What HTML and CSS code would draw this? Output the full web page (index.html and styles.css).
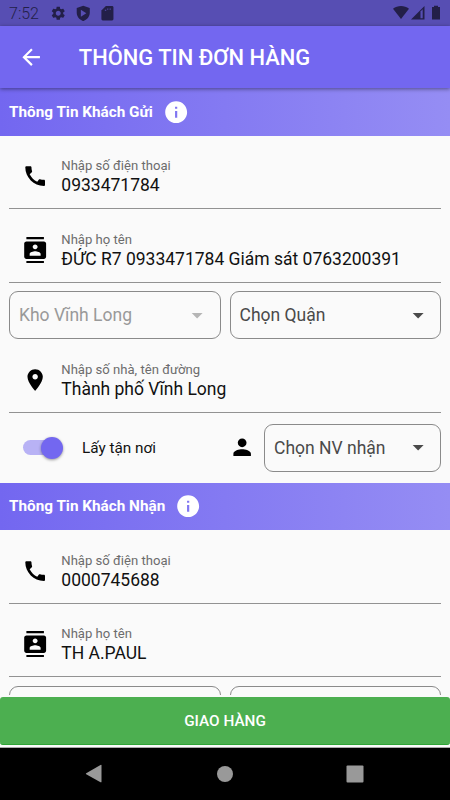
FILE: index.html
```html
<!DOCTYPE html>
<html lang="vi">

<head>
    <meta charset="UTF-8">
    <meta name="viewport" content="width=device-width, initial-scale=1.0">
    <title>Thông tin đơn hàng</title>
    <link rel="stylesheet" href="styles.css">
</head>

<body>
    <!-- icons -->
    <svg class="sprite" width="0" height="0">
        <symbol id="phone" viewBox="0 0 24 24">
            <path d="M20.01 15.38c-1.23 0-2.42-.2-3.53-.56-.35-.12-.74-.03-1.01.24l-1.57 1.97c-2.83-1.35-5.48-3.9-6.89-6.83l1.95-1.66c.27-.28.35-.67.24-1.02-.37-1.11-.56-2.3-.56-3.53 0-.54-.45-.99-.99-.99H4.19C3.65 3 3 3.24 3 3.99 3 13.28 10.73 21 20.01 21c.71 0 .99-.63.99-1.18v-3.45c0-.54-.45-.99-.99-.99z"/>
        </symbol>
        <symbol id="contacts" viewBox="0 0 24 24">
            <path d="M20 0H4v2h16V0zM4 24h16v-2H4v2zM20 4H4c-1.1 0-2 .9-2 2v12c0 1.1.9 2 2 2h16c1.1 0 2-.9 2-2V6c0-1.1-.9-2-2-2zm-8 2.75c1.24 0 2.25 1.01 2.25 2.25s-1.01 2.25-2.25 2.25S9.75 10.24 9.75 9 10.76 6.75 12 6.75zM17 17H7v-1.5c0-1.67 3.33-2.5 5-2.5s5 .83 5 2.5V17z"/>
        </symbol>
        <symbol id="place" viewBox="0 0 24 24">
            <path d="M12 2C8.13 2 5 5.13 5 9c0 5.25 7 13 7 13s7-7.75 7-13c0-3.87-3.13-7-7-7zm0 9.5c-1.38 0-2.5-1.12-2.5-2.5s1.12-2.5 2.5-2.5 2.5 1.12 2.5 2.5-1.12 2.5-2.5 2.5z"/>
        </symbol>
        <symbol id="person" viewBox="0 0 24 24">
            <path d="M12 12c2.21 0 4-1.79 4-4s-1.79-4-4-4-4 1.79-4 4 1.79 4 4 4zm0 2c-2.67 0-8 1.34-8 4v2h16v-2c0-2.66-5.33-4-8-4z"/>
        </symbol>
        <symbol id="info" viewBox="0 0 24 24">
            <path d="M12 2C6.48 2 2 6.48 2 12s4.48 10 10 10 10-4.48 10-10S17.52 2 12 2zm1 15h-2v-6h2v6zm0-8h-2V7h2v2z"/>
        </symbol>
        <symbol id="back" viewBox="0 0 24 24">
            <path d="M20 11H7.83l5.59-5.59L12 4l-8 8 8 8 1.41-1.41L7.83 13H20v-2z"/>
        </symbol>
        <symbol id="arrow" viewBox="0 0 24 24">
            <path d="M7 10l5 5 5-5z"/>
        </symbol>
    </svg>

    <div class="status">
        <span class="time">7:52</span>
        <svg class="st-icon" viewBox="0 0 24 24"><path d="M19.14 12.94c.04-.3.06-.61.06-.94 0-.32-.02-.64-.07-.94l2.03-1.58c.18-.14.23-.41.12-.61l-1.92-3.32c-.12-.22-.37-.29-.59-.22l-2.39.96c-.5-.38-1.03-.7-1.62-.94l-.36-2.54c-.04-.24-.24-.41-.48-.41h-3.84c-.24 0-.43.17-.47.41l-.36 2.54c-.59.24-1.13.57-1.62.94l-2.39-.96c-.22-.08-.47 0-.59.22L2.74 8.87c-.12.21-.08.47.12.61l2.03 1.58c-.05.3-.09.63-.09.94s.02.64.07.94l-2.03 1.58c-.18.14-.23.41-.12.61l1.92 3.32c.12.22.37.29.59.22l2.39-.96c.5.38 1.03.7 1.62.94l.36 2.54c.05.24.24.41.48.41h3.84c.24 0 .44-.17.47-.41l.36-2.54c.59-.24 1.13-.56 1.62-.94l2.39.96c.22.08.47 0 .59-.22l1.92-3.32c.12-.22.07-.47-.12-.61l-2.01-1.58zM12 15.6c-1.98 0-3.6-1.62-3.6-3.6s1.62-3.6 3.6-3.6 3.6 1.62 3.6 3.6-1.62 3.6-3.6 3.6z"/></svg>
        <svg class="st-icon" viewBox="0 0 24 24"><path fill-rule="evenodd" d="M12 1L2.500 4.500V11c0 6 4 10.500 9.500 12.500 5.500-2 9.500-6.500 9.500-12.500V4.500zM8.500 7v10l8-5z"/></svg>
        <svg class="st-icon" viewBox="0 0 24 24"><path d="M19 1.500h-9L3.500 8v12.500c0 1.100.9 2 2 2H19c1.100 0 2-.9 2-2v-17c0-1.100-.9-2-2-2z"/><path class="pins" d="M8.500 8.500h2V6.800H8.500zM12 7h1.500V5H12zM15.500 7H17V5h-1.500z"/></svg>
        <svg class="signals" viewBox="0 0 50 16">
            <path d="M1 3.800C5.500.2 12.500.2 17 3.800L9 14z"/>
            <path d="M32.500 1v13.500H19z"/>
            <path class="low" d="M28.500 6.500l2.200-2.200v9h-2.200z"/>
            <path d="M40 2h2V.8h4V2h2v12.600h-8z"/>
        </svg>
    </div>

    <header class="appbar">
        <svg class="icon"><use href="#back"/></svg>
        <h1>THÔNG TIN ĐƠN HÀNG</h1>
    </header>

    <main class="content">
        <h2 class="section">Thông Tin Khách Gửi <svg class="icon"><use href="#info"/></svg></h2>

        <div class="field">
            <svg class="icon"><use href="#phone"/></svg>
            <div class="text">
                <div class="label">Nhập số điện thoại</div>
                <div class="value">0933471784</div>
            </div>
        </div>
        <div class="field">
            <svg class="icon"><use href="#contacts"/></svg>
            <div class="text">
                <div class="label">Nhập họ tên</div>
                <div class="value">ĐỨC R7 0933471784 Giám sát 0763200391</div>
            </div>
        </div>
        <div class="row">
            <div class="select disabled">Kho Vĩnh Long <svg class="icon"><use href="#arrow"/></svg></div>
            <div class="select">Chọn Quận <svg class="icon"><use href="#arrow"/></svg></div>
        </div>
        <div class="field">
            <svg class="icon"><use href="#place"/></svg>
            <div class="text">
                <div class="label">Nhập số nhà, tên đường</div>
                <div class="value">Thành phố Vĩnh Long</div>
            </div>
        </div>
        <div class="row pickup">
            <div class="switch"><span class="thumb"></span></div>
            <span class="switch-label">Lấy tận nơi</span>
            <svg class="icon"><use href="#person"/></svg>
            <div class="select staff">Chọn NV nhận <svg class="icon"><use href="#arrow"/></svg></div>
        </div>

        <h2 class="section">Thông Tin Khách Nhận <svg class="icon"><use href="#info"/></svg></h2>

        <div class="field">
            <svg class="icon"><use href="#phone"/></svg>
            <div class="text">
                <div class="label">Nhập số điện thoại</div>
                <div class="value">0000745688</div>
            </div>
        </div>
        <div class="field">
            <svg class="icon"><use href="#contacts"/></svg>
            <div class="text">
                <div class="label">Nhập họ tên</div>
                <div class="value">TH A.PAUL</div>
            </div>
        </div>
        <div class="row">
            <div class="select"></div>
            <div class="select"></div>
        </div>
    </main>

    <div class="footer">
        <button class="btn">GIAO HÀNG</button>
    </div>

    <nav class="navbar">
        <svg viewBox="0 0 24 24"><path d="M17.500 3.500v16.200q0 1-1 .5L2.200 12.300q-.7-.5 0-1L16.500 3q1-.5 1 .5z"/></svg>
        <svg viewBox="0 0 24 24"><circle cx="12" cy="12" r="8"/></svg>
        <svg viewBox="0 0 24 24"><rect x="3.500" y="3.500" width="17" height="17" rx="1"/></svg>
    </nav>
</body>

</html>
```
FILE: styles.css
```css
* {
    box-sizing: border-box;
}

body {
    margin: 0;
    width: 450px;
    height: 800px;
    display: flex;
    flex-direction: column;
    overflow: hidden;
    background-color: #fafafa;
    font-family: Roboto, "Noto Sans", sans-serif;
    color: #111;
}

.sprite {
    position: absolute;
}

.icon {
    width: 26.3px;
    height: 26.3px;
    flex: none;
    fill: currentColor;
}

/* status bar */
.status {
    height: 26px;
    flex: none;
    display: flex;
    align-items: center;
    padding: 0 8px 0 9px;
    background-color: #574eb3;
    color: #231f48;
    fill: #231f48;
}

.time {
    width: 41px;
    font-size: 16px;
    font-weight: 300;
}

.st-icon {
    width: 16.5px;
    height: 16.5px;
    margin-right: 8px;
}

.pins,
.low {
    fill: #574eb3;
}

.signals {
    width: 50px;
    height: 16px;
    margin-left: auto;
}

/* app bar */
.appbar {
    height: 62px;
    flex: none;
    display: flex;
    align-items: center;
    padding-left: 17.5px;
    background-color: #7367f0;
    color: #fff;
    box-shadow: 0 1px 4px rgba(0, 0, 0, 0.45);
    z-index: 1;
}

.appbar h1 {
    margin: 0 0 0 35px;
    padding-top: 1px;
    font-size: 21.9px;
    font-weight: 500;
}

.content {
    height: 607px;
    flex: none;
    overflow: hidden;
}

.section {
    height: 47.5px;
    margin: 0;
    padding-left: 9px;
    display: flex;
    align-items: center;
    gap: 10px;
    font-size: 15.3px;
    font-weight: 700;
    color: #fff;
    background: linear-gradient(to right, #7367f0, #958df4);
}

.field {
    height: 73.5px;
    margin: 0 9px;
    padding: 9px 0 0 13px;
    display: flex;
    align-items: center;
    gap: 13px;
    border-bottom: 1px solid #929292;
}

.field .icon {
    color: #000;
}

.text {
    padding-top: 2.5px;
}

.label {
    font-size: 13.1px;
    line-height: 16px;
    color: #6c6c6c;
}

.value {
    font-size: 17.5px;
    line-height: 23px;
}

.row {
    display: flex;
    gap: 9px;
    padding: 8.5px 9px 0;
}

.select {
    height: 48px;
    flex: 1;
    display: flex;
    align-items: center;
    justify-content: space-between;
    padding: 0 9px;
    border: 1px solid #8a8a8a;
    border-radius: 9px;
    font-size: 17.5px;
    color: #4a4a4a;
}

.select.disabled {
    color: #999;
}

.select.disabled .icon {
    color: #b5b5b5;
}

/* pickup row */
.pickup {
    height: 70px;
    align-items: center;
    padding: 0 9px 0 23px;
}

.pickup > .icon {
    color: #000;
}

.switch {
    width: 36px;
    height: 15.5px;
    display: flex;
    align-items: center;
    border-radius: 8px;
    background-color: #b8b2f5;
}

.thumb {
    width: 22px;
    height: 22px;
    flex: none;
    margin-left: 17.5px;
    border-radius: 50%;
    background-color: #7367f0;
    box-shadow: 0 1px 3px rgba(0, 0, 0, 0.4);
}

.switch-label {
    margin-left: 14px;
    margin-right: auto;
    font-size: 15.3px;
}

.select.staff {
    flex: none;
    width: 177px;
}

/* bottom button */
.footer {
    height: 53px;
    flex: none;
    padding-top: 2px;
    border-bottom: 1px solid #aaa;
}

.btn {
    display: block;
    width: 100%;
    height: 48px;
    padding-top: 2px;
    border: none;
    border-bottom: 1px solid #2fa336;
    border-radius: 3px;
    background-color: #4caf50;
    color: #fff;
    font-family: inherit;
    font-size: 15.3px;
    font-weight: 500;
}

.navbar {
    flex: 1;
    display: flex;
    align-items: center;
    justify-content: center;
    gap: 105.5px;
    background-color: #000;
    fill: #999;
}

.navbar svg {
    width: 24px;
    height: 24px;
}
```
